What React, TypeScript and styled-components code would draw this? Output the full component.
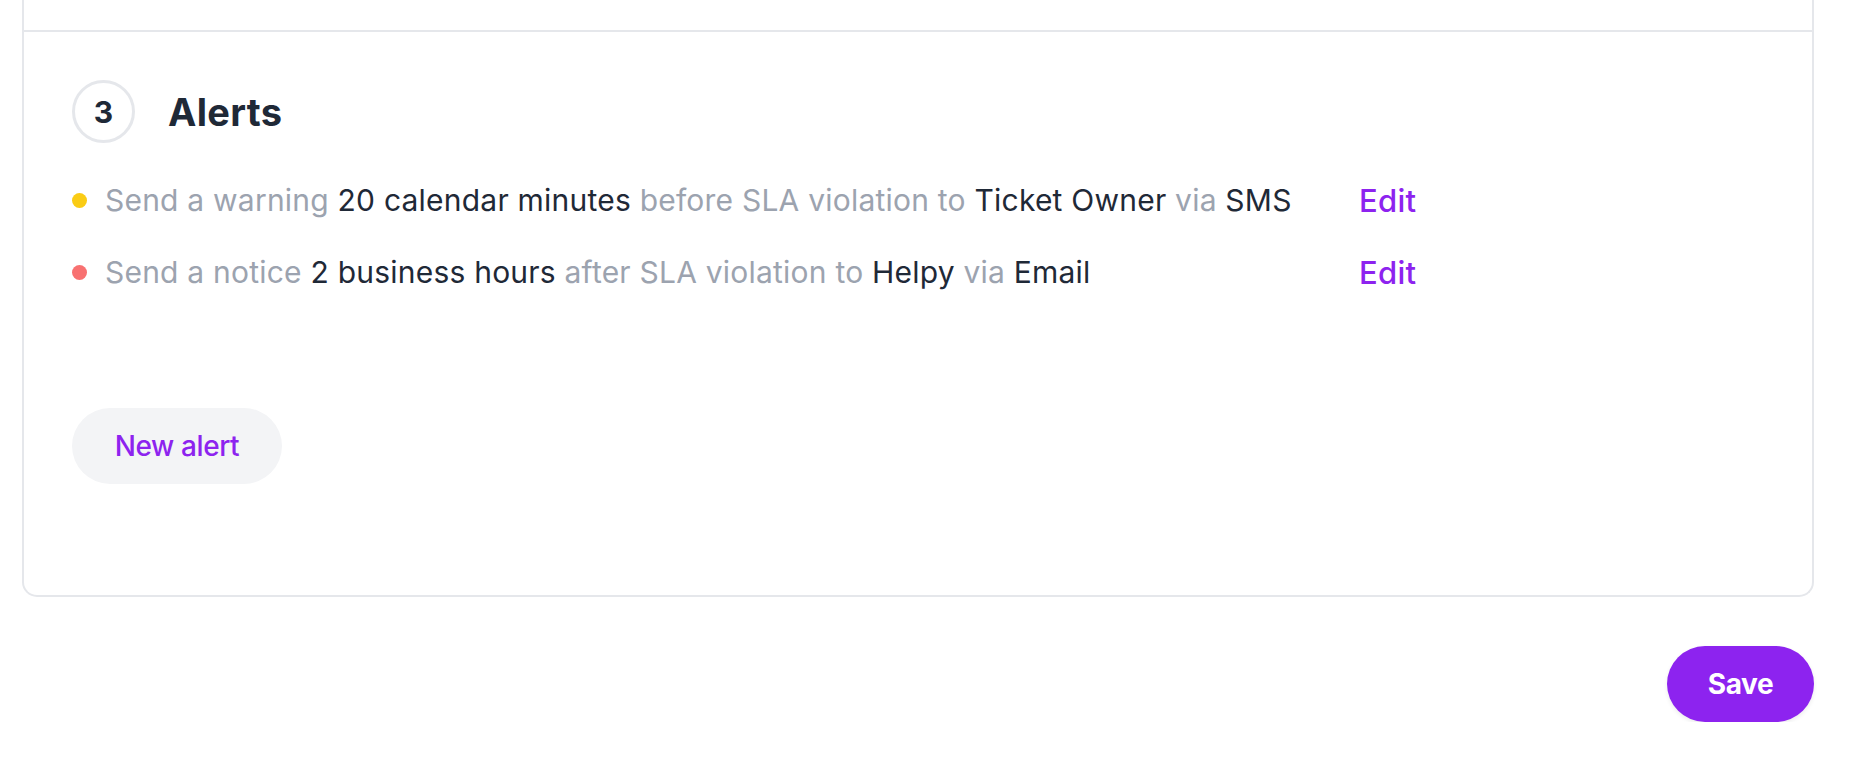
import React from "react";
import styled, { createGlobalStyle } from "styled-components";

const GlobalStyle = createGlobalStyle`
  html, body {
    margin: 0;
    padding: 0;
    background: #ffffff;
    font-family: Inter, "Noto Sans", "Liberation Sans", sans-serif;
    -webkit-font-smoothing: antialiased;
  }
  * { box-sizing: border-box; }
`;

const Page = styled.div`
  width: 1874px;
  padding: 0 60px 0 22px;
`;

const Card = styled.div`
  width: 1792px;
  border: 2px solid #e5e7eb;
  border-top: none;
  border-radius: 0 0 15px 15px;
  background: #fff;
`;

const PrevSection = styled.div`
  height: 30px;
`;

const Section = styled.section`
  border-top: 2px solid #e5e7eb;
  padding: 48px 48px 111px 48px;
  display: flex;
  flex-direction: column;
`;

const Header = styled.div`
  display: flex;
  align-items: center;
  gap: 33px;
`;

const StepCircle = styled.div`
  width: 63px;
  height: 63px;
  border-radius: 50%;
  border: 3px solid #e5e7eb;
  display: flex;
  align-items: center;
  justify-content: center;
  font-size: 30px;
  font-weight: 700;
  color: #1f2937;
`;

const Title = styled.h2`
  margin: 0;
  font-size: 38px;
  font-weight: 700;
  color: #1f2937;
  letter-spacing: 0.3px;
`;

const AlertList = styled.div`
  margin-top: 35px;
  display: flex;
  flex-direction: column;
  gap: 27px;
`;

const AlertRow = styled.div`
  display: grid;
  grid-template-columns: 15px 1236px auto;
  column-gap: 18px;
  align-items: center;
  font-size: 30px;
  line-height: 45px;
`;

const Dot = styled.span<{ $color: string }>`
  width: 15px;
  height: 15px;
  border-radius: 50%;
  background: ${(p) => p.$color};
`;

const Sentence = styled.span`
  color: #1f2937;
  white-space: nowrap;
  letter-spacing: 0.22px;
`;

const Muted = styled.span`
  color: #9ca3af;
`;

const EditLink = styled.a`
  color: #8d23ef;
  font-size: 31px;
  font-weight: 500;
  letter-spacing: 0.3px;
  text-decoration: none;
  cursor: pointer;
`;

const NewAlertButton = styled.button`
  margin-top: 113px;
  align-self: flex-start;
  height: 76px;
  width: 210px;
  border: none;
  border-radius: 38px;
  background: #f3f4f6;
  color: #8d23ef;
  font-family: inherit;
  font-size: 28px;
  font-weight: 500;
  letter-spacing: -0.4px;
  cursor: pointer;
`;

const Footer = styled.div`
  width: 1792px;
  display: flex;
  justify-content: flex-end;
  margin-top: 49px;
`;

const SaveButton = styled.button`
  height: 76px;
  width: 147px;
  border: none;
  border-radius: 38px;
  background: #8d23ef;
  color: #ffffff;
  font-family: inherit;
  font-size: 28px;
  font-weight: 700;
  letter-spacing: -0.4px;
  box-shadow: 0 2px 4px rgba(0, 0, 0, 0.08);
  cursor: pointer;
`;

type Part = { text: string; strong?: boolean };

const alerts: { color: string; parts: Part[] }[] = [
  {
    color: "#facc15",
    parts: [
      { text: "Send a warning " },
      { text: "20 calendar minutes", strong: true },
      { text: " before SLA violation to " },
      { text: "Ticket Owner", strong: true },
      { text: " via " },
      { text: "SMS", strong: true },
    ],
  },
  {
    color: "#f87171",
    parts: [
      { text: "Send a notice " },
      { text: "2 business hours", strong: true },
      { text: " after SLA violation to " },
      { text: "Helpy", strong: true },
      { text: " via " },
      { text: "Email", strong: true },
    ],
  },
];

export default function App() {
  return (
    <>
      <GlobalStyle />
      <Page>
        <Card>
          <PrevSection />
          <Section>
            <Header>
              <StepCircle>3</StepCircle>
              <Title>Alerts</Title>
            </Header>
            <AlertList>
              {alerts.map((a, i) => (
                <AlertRow key={i}>
                  <Dot $color={a.color} />
                  <Sentence>
                    {a.parts.map((p, j) =>
                      p.strong ? (
                        <React.Fragment key={j}>{p.text}</React.Fragment>
                      ) : (
                        <Muted key={j}>{p.text}</Muted>
                      )
                    )}
                  </Sentence>
                  <EditLink>Edit</EditLink>
                </AlertRow>
              ))}
            </AlertList>
            <NewAlertButton>New alert</NewAlertButton>
          </Section>
        </Card>
        <Footer>
          <SaveButton>Save</SaveButton>
        </Footer>
      </Page>
    </>
  );
}
